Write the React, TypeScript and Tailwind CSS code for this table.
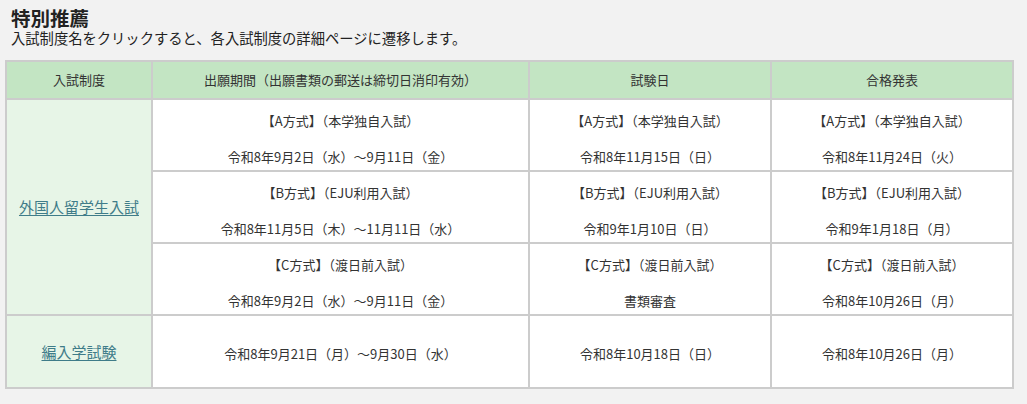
import React from "react";

const font = "font-['Noto_Sans_CJK_JP','Noto_Sans',sans-serif]";

function Two({ a, b }: { a: string; b: string }) {
  return (
    <div className="flex h-[70px] flex-col items-center pt-[12px] leading-[18px]">
      <div>{a}</div>
      <div className="h-[18px]" />
      <div>{b}</div>
    </div>
  );
}

function One({ t }: { t: string }) {
  return (
    <div className="flex h-[71px] items-center justify-center pt-[4px] leading-[18px]">
      {t}
    </div>
  );
}

const rows = [
  {
    a: ["【A方式】（本学独自入試）", "令和8年9月2日（水）～9月11日（金）"],
    b: ["【A方式】（本学独自入試）", "令和8年11月15日（日）"],
    c: ["【A方式】（本学独自入試）", "令和8年11月24日（火）"],
  },
  {
    a: ["【B方式】（EJU利用入試）", "令和8年11月5日（木）～11月11日（水）"],
    b: ["【B方式】（EJU利用入試）", "令和9年1月10日（日）"],
    c: ["【B方式】（EJU利用入試）", "令和9年1月18日（月）"],
  },
  {
    a: ["【C方式】（渡日前入試）", "令和8年9月2日（水）～9月11日（金）"],
    b: ["【C方式】（渡日前入試）", "書類審査"],
    c: ["【C方式】（渡日前入試）", "令和8年10月26日（月）"],
  },
];

export default function App() {
  return (
    <div className={`min-h-[404px] w-full bg-[#f2f2f2] pl-[5px] pt-[8px] text-[#333] ${font}`}>
      <div className="pl-[6px]">
        <h1 className="text-[19.5px] font-bold leading-[20px] text-[#222]">特別推薦</h1>
        <p className="text-[14.3px] leading-[20px] text-[#222]">
          入試制度名をクリックすると、各入試制度の詳細ページに遷移します。
        </p>
      </div>
      <table className="mt-[12px] w-[1009px] table-fixed border-separate border-spacing-[2px] bg-[#cccccc] text-center text-[13px]">
        <colgroup>
          <col className="w-[144px]" />
          <col className="w-[375px]" />
          <col className="w-[240px]" />
          <col className="w-[240px]" />
        </colgroup>
        <thead>
          <tr>
            {["入試制度", "出願期間（出願書類の郵送は締切日消印有効）", "試験日", "合格発表"].map((h) => (
              <th key={h} className="h-[36px] bg-[#c3e5c3] p-0 font-normal leading-[18px]">
                {h}
              </th>
            ))}
          </tr>
        </thead>
        <tbody>
          {rows.map((r, i) => (
            <tr key={i}>
              {i === 0 && (
                <td rowSpan={3} className="bg-[#e7f5e7] p-0 align-middle">
                  <a href="#" className="text-[15px] text-[#3f7c89] underline underline-offset-2">
                    外国人留学生入試
                  </a>
                </td>
              )}
              <td className="bg-white p-0 align-top">
                <Two a={r.a[0]} b={r.a[1]} />
              </td>
              <td className="bg-white p-0 align-top">
                <Two a={r.b[0]} b={r.b[1]} />
              </td>
              <td className="bg-white p-0 align-top">
                <Two a={r.c[0]} b={r.c[1]} />
              </td>
            </tr>
          ))}
          <tr>
            <td className="bg-[#e7f5e7] p-0 align-top">
              <div className="flex h-[71px] items-center justify-center pt-[2px]">
                <a href="#" className="text-[15px] text-[#3f7c89] underline underline-offset-2">
                  編入学試験
                </a>
              </div>
            </td>
            <td className="bg-white p-0 align-top">
              <One t="令和8年9月21日（月）～9月30日（水）" />
            </td>
            <td className="bg-white p-0 align-top">
              <One t="令和8年10月18日（日）" />
            </td>
            <td className="bg-white p-0 align-top">
              <One t="令和8年10月26日（月）" />
            </td>
          </tr>
        </tbody>
      </table>
    </div>
  );
}
